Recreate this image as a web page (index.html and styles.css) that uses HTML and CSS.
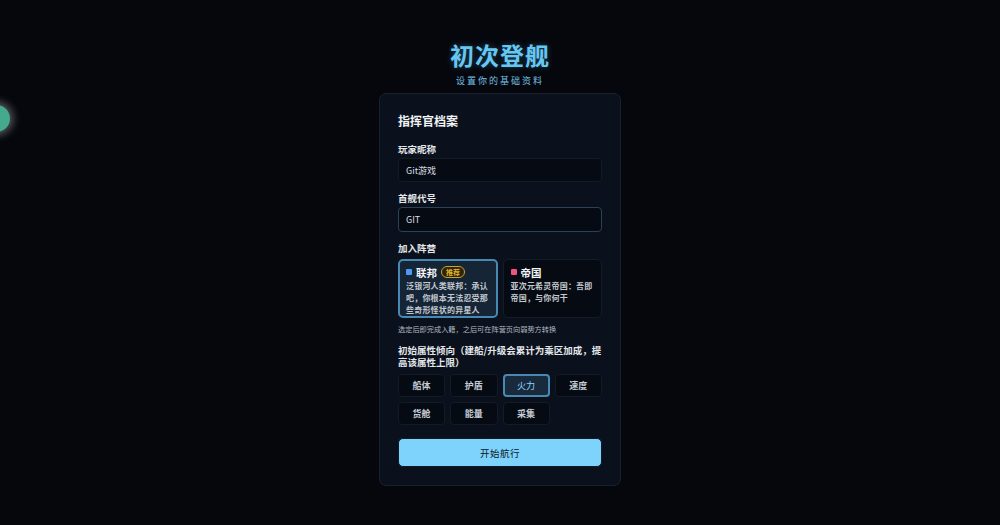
FILE: index.html
```html
<!DOCTYPE html>
<html lang="zh">
<head>
<meta charset="utf-8">
<title>初次登舰</title>
<link rel="stylesheet" href="styles.css">
</head>
<body>
<div class="orb"></div>
<main class="page">
  <h1 class="title">初次登舰</h1>
  <p class="subtitle">设置你的基础资料</p>
  <section class="card">
    <h2 class="card-title">指挥官档案</h2>
    <label class="label first">玩家昵称</label>
    <div class="input">Git游戏</div>
    <label class="label">首舰代号</label>
    <div class="input focused">GIT</div>
    <label class="label">加入阵营</label>
    <div class="factions">
      <div class="faction selected">
        <div class="faction-head"><span class="dot blue"></span><span class="fname">联邦</span><span class="badge">推荐</span></div>
        <p class="fdesc">泛银河人类联邦：承认吧，你根本无法忍受那些奇形怪状的异星人</p>
      </div>
      <div class="faction">
        <div class="faction-head"><span class="dot pink"></span><span class="fname">帝国</span></div>
        <p class="fdesc">亚次元希灵帝国：吾即帝国，与你何干</p>
      </div>
    </div>
    <p class="hint">选定后即完成入籍，之后可在阵营页向弱势方转换</p>
    <label class="label attr-label">初始属性倾向（建船/升级会累计为乘区加成，提高该属性上限）</label>
    <div class="attrs">
      <div class="attr">船体</div>
      <div class="attr">护盾</div>
      <div class="attr active">火力</div>
      <div class="attr">速度</div>
      <div class="attr">货舱</div>
      <div class="attr">能量</div>
      <div class="attr">采集</div>
    </div>
    <button class="start">开始航行</button>
  </section>
</main>
</body>
</html>
```
FILE: styles.css
```css
* { box-sizing: border-box; }
html, body { margin: 0; padding: 0; }
body {
  background: #05070c;
  height: 525px;
  overflow: hidden;
  font-family: "Noto Sans CJK SC", "Noto Sans", sans-serif;
  color: #e6e9ee;
}
.orb {
  position: absolute;
  left: -17px;
  top: 105px;
  width: 27px;
  height: 27px;
  border-radius: 50%;
  background: #45a98d;
  box-shadow: 0 0 9px 3px rgba(190, 195, 205, 0.45);
}
.page {
  display: flex;
  flex-direction: column;
  align-items: center;
  padding-top: 39px;
}
.title {
  margin: 0;
  font-size: 24px;
  line-height: 32px;
  font-weight: 700;
  letter-spacing: 1px;
  color: #66c7f2;
  text-shadow: 0 0 6px rgba(90, 190, 240, 0.35);
}
.subtitle {
  margin: 3px 0 0;
  font-size: 9px;
  line-height: 14px;
  letter-spacing: 2px;
  color: #74c0e6;
}
.card {
  margin-top: 5px;
  width: 242px;
  padding: 18px 18px 18px 18px;
  background: #0a111c;
  border: 1px solid #18222f;
  border-radius: 7px;
  display: flex;
  flex-direction: column;
}
.card-title {
  margin: 0;
  font-size: 12px;
  line-height: 17px;
  font-weight: 700;
  color: #f1f3f6;
}
.label {
  display: block;
  font-size: 9.5px;
  line-height: 14px;
  font-weight: 700;
  color: #e3e6ea;
  margin-top: 9px;
  margin-bottom: 2px;
}
.label.first { margin-top: 13px; }
.input {
  height: 24px;
  padding: 0 7px;
  display: flex;
  align-items: center;
  background: #060b13;
  border: 1px solid #121b27;
  border-radius: 4px;
  font-size: 9px;
  color: #d9dde3;
}
.input.focused {
  height: 25px;
  border: 1px solid #2a4257;
}
.factions {
  margin-top: 2px;
  display: grid;
  grid-template-columns: 1fr 1fr;
  gap: 5px;
}
.faction {
  height: 59px;
  padding: 5px 7px 3px;
  background: #060b13;
  border: 1px solid #131c28;
  border-radius: 5px;
}
.faction.selected {
  background: #152536;
  border: 2px solid #4789b3;
  padding: 4px 6px 2px;
}
.faction-head {
  display: flex;
  align-items: center;
  height: 14px;
}
.dot {
  width: 6px;
  height: 6px;
  border-radius: 1px;
  margin-right: 4px;
}
.dot.blue { background: #4a9af5; }
.dot.pink { background: #f0517f; }
.fname {
  font-size: 10.5px;
  font-weight: 700;
  color: #f2f4f7;
}
.badge {
  margin-left: 4px;
  font-size: 7px;
  line-height: 10px;
  padding: 0 4px;
  border: 1px solid #d1a21b;
  border-radius: 6px;
  color: #e3b52c;
  background: #2a2410;
  font-weight: 700;
}
.fdesc {
  margin: 1px 0 0;
  font-size: 8px;
  line-height: 12px;
  letter-spacing: 0.2px;
  font-weight: 700;
  color: #c3c8cf;
}
.hint {
  margin: 6px 0 0;
  font-size: 7.2px;
  line-height: 11px;
  color: #b0b7c0;
}
.label.attr-label {
  margin-top: 9px;
  margin-bottom: 6px;
  line-height: 12px;
}
.attrs {
  display: grid;
  grid-template-columns: repeat(4, 1fr);
  gap: 5px;
}
.attr {
  height: 23px;
  display: flex;
  align-items: center;
  justify-content: center;
  background: #060b13;
  border: 1px solid #121b27;
  border-radius: 4px;
  font-size: 9px;
  color: #c5ccd5;
  font-weight: 700;
}
.attr.active {
  background: #182a3c;
  border: 2px solid #4789b3;
  color: #8ad6fb;
  font-weight: 400;
}
.start {
  margin: 13px 0 0;
  width: 100%;
  height: 29px;
  border: 1px solid #0e1a26;
  border-radius: 5px;
  background: #7dd3fc;
  color: #0d1622;
  font-family: inherit;
  font-size: 9.5px;
  letter-spacing: 0.5px;
  cursor: pointer;
}
```
